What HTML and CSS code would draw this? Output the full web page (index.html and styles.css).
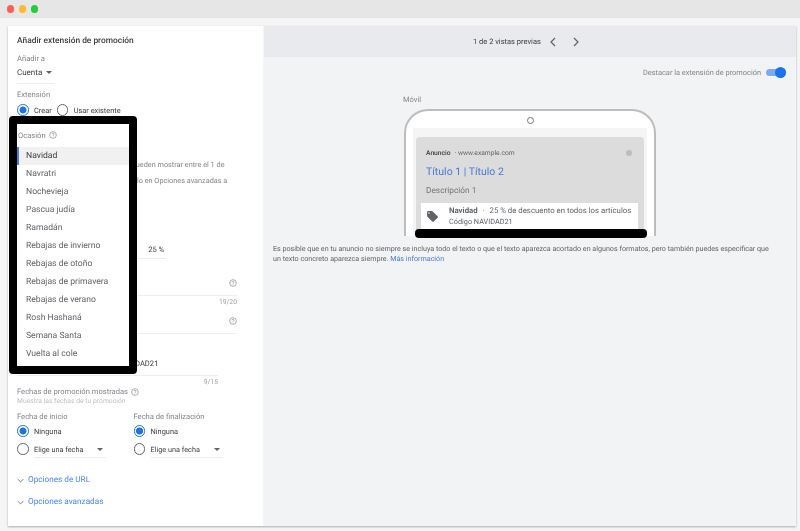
FILE: index.html
```html
<!DOCTYPE html>
<html lang="es">
<head>
    <meta charset="UTF-8">
    <title>Añadir extensión de promoción</title>
    <link rel="stylesheet" href="styles.css">
</head>
<body>
    <div class="titlebar">
        <span class="dot dot-red"></span>
        <span class="dot dot-yellow"></span>
        <span class="dot dot-green"></span>
    </div>

    <div class="window">
        <!-- Form -->
        <div class="form">
            <h1>Añadir extensión de promoción</h1>

            <div class="label add-label">Añadir a</div>
            <div class="select account"><span>Cuenta</span><i class="caret"></i></div>

            <div class="label ext-label">Extensión</div>
            <div class="radio-row">
                <span class="radio on"></span><span class="radio-text">Crear</span>
                <span class="radio second"></span><span class="radio-text">Usar existente</span>
            </div>

            <p class="hidden-note first">Las extensiones de promoción se pueden mostrar entre el 1 de</p>
            <p class="hidden-note">octubre y el 31 de diciembre. Cámbialo en Opciones avanzadas a</p>

            <div class="field percent"><span>25 %</span></div>

            <div class="field wide help-field">
                <svg class="help" viewBox="0 0 12 12"><use href="#help"></use></svg>
            </div>
            <div class="counter">19/20</div>

            <div class="field wide help-field second-help">
                <svg class="help" viewBox="0 0 12 12"><use href="#help"></use></svg>
            </div>

            <div class="field code"><span>NAVIDAD21</span></div>
            <div class="counter code-counter">9/15</div>

            <div class="label dates-label">Fechas de promoción mostradas
                <svg class="help" viewBox="0 0 12 12"><use href="#help"></use></svg>
            </div>
            <div class="hint">Muestra las fechas de tu promoción</div>

            <div class="dates">
                <div class="date-col">
                    <div class="label">Fecha de inicio</div>
                    <div class="radio-row date-none"><span class="radio on"></span><span class="radio-text">Ninguna</span></div>
                    <div class="radio-row date-pick"><span class="radio"></span><div class="select pick"><span>Elige una fecha</span><i class="caret"></i></div></div>
                </div>
                <div class="date-col">
                    <div class="label">Fecha de finalización</div>
                    <div class="radio-row date-none"><span class="radio on"></span><span class="radio-text">Ninguna</span></div>
                    <div class="radio-row date-pick"><span class="radio"></span><div class="select pick"><span>Elige una fecha</span><i class="caret"></i></div></div>
                </div>
            </div>

            <a class="expander url-options" href="#"><svg viewBox="0 0 10 6"><path d="M1 1l4 4 4-4"/></svg>Opciones de URL</a>
            <a class="expander" href="#"><svg viewBox="0 0 10 6"><path d="M1 1l4 4 4-4"/></svg>Opciones avanzadas</a>
        </div>

        <!-- Preview -->
        <div class="preview">
            <div class="pager">
                <span>1 de 2 vistas previas</span>
                <svg viewBox="0 0 8 10"><path d="M6 1L2 5l4 4"/></svg>
                <svg viewBox="0 0 8 10"><path d="M2 1l4 4-4 4"/></svg>
            </div>

            <div class="highlight">
                <span>Destacar la extensión de promoción</span>
                <div class="toggle"><i></i></div>
            </div>

            <div class="device-label">Móvil</div>
            <div class="phone">
                <div class="camera"></div>
                <div class="screen">
                    <div class="ad">
                        <div class="ad-top">
                            <b>Anuncio</b><span>· www.example.com</span><i></i>
                        </div>
                        <div class="ad-title">Título 1 | Título 2</div>
                        <div class="ad-desc">Descripción 1</div>
                        <div class="promo">
                            <svg viewBox="0 0 24 24"><path d="M21.4 11.6l-9-9C12 2.2 11.5 2 11 2H4c-1.1 0-2 .9-2 2v7c0 .6.2 1.1.6 1.4l9 9c.4.4.9.6 1.4.6s1.1-.2 1.4-.6l7-7c.4-.4.6-.9.6-1.4s-.2-1.1-.6-1.4zM5.5 7C4.7 7 4 6.3 4 5.500S4.700 4 5.500 4 7 4.700 7 5.500 6.300 7 5.500 7z"/></svg>
                            <div>
                                <div class="promo-line"><b>Navidad</b> <span class="sep">·</span> 25 % de descuento en todos los artículos</div>
                                <div class="promo-code">Código NAVIDAD21</div>
                            </div>
                        </div>
                    </div>
                </div>
                <div class="phone-mask"></div>
            </div>

            <p class="note">Es posible que en tu anuncio no siempre se incluya todo el texto o que el texto aparezca acortado en algunos formatos, pero también puedes especificar que un texto concreto aparezca siempre. <a href="#">Más información</a></p>
        </div>

        <!-- Occasion menu over the form -->
        <div class="occasion">
            <div class="occasion-head">Ocasión
                <svg class="help" viewBox="0 0 12 12"><use href="#help"></use></svg>
            </div>
            <div class="item active">Navidad</div>
            <div class="item">Navratri</div>
            <div class="item">Nochevieja</div>
            <div class="item">Pascua judía</div>
            <div class="item">Ramadán</div>
            <div class="item">Rebajas de invierno</div>
            <div class="item">Rebajas de otoño</div>
            <div class="item">Rebajas de primavera</div>
            <div class="item">Rebajas de verano</div>
            <div class="item">Rosh Hashaná</div>
            <div class="item">Semana Santa</div>
            <div class="item">Vuelta al cole</div>
        </div>
    </div>

    <svg class="defs" width="0" height="0">
        <symbol id="help" viewBox="0 0 12 12">
            <circle cx="6" cy="6" r="5" fill="none" stroke="currentColor" stroke-width="1"/>
            <path d="M4.400 4.800C4.400 3.900 5.100 3.300 6 3.300s1.600.6 1.600 1.400c0 1.100-1.600 1.200-1.600 2.500" fill="none" stroke="currentColor" stroke-width="1"/>
            <circle cx="6" cy="8.800" r=".6" fill="currentColor"/>
        </symbol>
    </svg>
</body>
</html>
```

FILE: styles.css
```css
* {
    box-sizing: border-box;
}

html, body {
    margin: 0;
    padding: 0;
    height: 531px;
    overflow: hidden;
}

body {
    font-family: Roboto, "Liberation Sans", sans-serif;
    background-color: #f5f5f5;
    color: #3c4043;
    text-rendering: geometricPrecision;
}

.defs {
    position: absolute;
}

/* Title bar */

.titlebar {
    height: 18px;
    background-color: #e6e6e6;
    display: flex;
    align-items: center;
    gap: 4.500px;
    padding-left: 6.500px;
}

.dot {
    width: 7.500px;
    height: 7.500px;
    border-radius: 50%;
}

.dot-red { background-color: #fb5f57; }
.dot-yellow { background-color: #fcbc2e; }
.dot-green { background-color: #29c940; }

.window {
    position: relative;
    display: flex;
    margin: 8px 4px 0 8px;
    height: 500px;
    gap: 1px;
    box-shadow: 0 1px 2px rgba(0, 0, 0, 0.3);
    filter: blur(0.4px);
    will-change: transform;
}

/* Form */

.form {
    width: 255px;
    background-color: #ffffff;
    padding: 10px 9px 0;
    font-size: 7.500px;
}

h1 {
    font-size: 8.400px;
    font-weight: 500;
    line-height: 11px;
    margin: 0;
    color: #3c4043;
}

.label {
    font-size: 7.600px;
    line-height: 10px;
    color: #80868b;
}

.add-label { margin-top: 7px; }

.select {
    display: flex;
    align-items: center;
    color: #3c4043;
    border-bottom: 1px solid #eeeeee;
}

.caret {
    width: 0;
    height: 0;
    border-left: 3px solid transparent;
    border-right: 3px solid transparent;
    border-top: 3px solid #5f6368;
}

.account {
    width: 37px;
    height: 17px;
    margin-top: 3px;
    padding-bottom: 5px;
    font-size: 8px;
    gap: 4px;
}

.ext-label { margin-top: 6px; }

.radio-row {
    display: flex;
    align-items: center;
    height: 12px;
}

.radio {
    width: 11.500px;
    height: 11.500px;
    flex: none;
    border-radius: 50%;
    border: 1px solid #5f6368;
}

.radio.on {
    border-color: #1a73e8;
    background: radial-gradient(circle, #1a73e8 0 3.200px, #ffffff 3.800px);
}

.radio.second {
    margin-left: 5px;
}

.radio-text {
    margin-left: 5.500px;
    font-size: 7.400px;
    color: #3c4043;
}

.ext-label + .radio-row { margin-top: 4px; }

.hidden-note {
    margin: 0;
    font-size: 7.300px;
    line-height: 10px;
    color: #80868b;
    white-space: nowrap;
    text-align: right;
    width: 207.500px;
}

.hidden-note.first { margin-top: 44px; }
.hidden-note + .hidden-note { margin-top: 6px; width: 201px; }

.field {
    border-bottom: 1px solid #eeeeee;
    font-size: 7.600px;
    display: flex;
    align-items: center;
}

.percent {
    width: 60px;
    height: 16px;
    margin: 57px 0 0 89px;
    justify-content: flex-end;
    padding: 0 2px 3px 0;
    font-size: 7.500px;
}

.wide {
    width: 220px;
    justify-content: flex-end;
}

.help-field {
    height: 22px;
    margin-top: 15px;
    padding: 0 0 3px 0;
}

.help {
    width: 8px;
    height: 8px;
    color: #80868b;
    flex: none;
}

.counter {
    width: 220px;
    text-align: right;
    font-size: 6.800px;
    line-height: 9px;
    margin-top: 2px;
    color: #9aa0a6;
}

.second-help {
    height: 22px;
    margin-top: 5px;
}

.code {
    width: 201px;
    height: 21px;
    margin-top: 21px;
    padding: 0 0 3px 101px;
    font-size: 7.600px;
}

.code-counter {
    width: 201px;
    margin-top: 2px;
}

.dates-label {
    display: flex;
    align-items: center;
    gap: 3px;
}

.hint {
    font-size: 6.800px;
    line-height: 9px;
    color: #bdc1c6;
}

.dates {
    display: flex;
    margin-top: 6px;
}

.date-col {
    width: 116.500px;
}

.date-none { margin-top: 3px; }
.date-pick { margin-top: 6px; }

.pick {
    width: 72px;
    height: 15px;
    margin: 3px 0 0 5.500px;
    padding-bottom: 2px;
    font-size: 7.300px;
    justify-content: space-between;
    padding-right: 3px;
}

.expander {
    display: flex;
    align-items: center;
    gap: 4px;
    font-size: 8.200px;
    line-height: 11px;
    color: #4285f4;
    text-decoration: none;
}

.expander svg {
    width: 7px;
    height: 5px;
    fill: none;
    stroke: #5f6368;
    stroke-width: 1.200;
}

.url-options {
    margin-top: 20px;
    margin-bottom: 11px;
}

/* Occasion menu */

.occasion {
    position: absolute;
    left: 1px;
    top: 90px;
    width: 128px;
    height: 258px;
    background-color: #ffffff;
    border: 8px solid #000000;
    border-radius: 4px;
    font-size: 8.600px;
}

.occasion-head {
    display: flex;
    align-items: center;
    gap: 3px;
    height: 22px;
    margin-bottom: 1px;
    padding-left: 1px;
    font-size: 7.600px;
    color: #80868b;
}

.item {
    height: 18px;
    line-height: 18px;
    padding-left: 9px;
    color: #5f6368;
}

.item.active {
    background-color: #f1f1f1;
    border-left: 2px solid #4a7fe0;
    padding-left: 7px;
    color: #3c4043;
}

/* Preview */

.preview {
    flex: 1;
    background-color: #f1f3f4;
}

.pager {
    height: 31px;
    background-color: #e8eaed;
    display: flex;
    align-items: center;
    padding-left: 209px;
    font-size: 7.500px;
    color: #3c4043;
}

.pager svg {
    width: 8px;
    height: 10px;
    fill: none;
    stroke: #5f6368;
    stroke-width: 1.200;
    margin-left: 15px;
}

.pager span + svg {
    margin-left: 8px;
}

.highlight {
    display: flex;
    align-items: center;
    justify-content: flex-end;
    gap: 5px;
    height: 12px;
    margin-top: 9px;
    padding-right: 10px;
    font-size: 7.400px;
    color: #80868b;
}

.toggle {
    position: relative;
    width: 20px;
    height: 7px;
    border-radius: 4px;
    background-color: #7baaf0;
}

.toggle i {
    position: absolute;
    right: 0;
    top: -2px;
    width: 11px;
    height: 11px;
    border-radius: 50%;
    background-color: #1a73e8;
}

.device-label {
    margin: 17px 0 0 139px;
    font-size: 7.500px;
    line-height: 10px;
    color: #80868b;
}

.phone {
    position: relative;
    width: 252px;
    height: 127px;
    margin: 4px 0 0 140px;
    background-color: #ffffff;
    border: 2px solid #bdbdbd;
    border-bottom: none;
    border-radius: 24px 24px 0 0;
}

.camera {
    width: 7px;
    height: 7px;
    margin: 6px auto 0;
    border: 1px solid #757575;
    border-radius: 50%;
}

.screen {
    height: 107px;
    margin: 4px 7px 0;
    padding: 9px 3px 0;
    background-color: #f5f5f5;
}

.ad {
    height: 98px;
    padding: 10px 0 0;
    background-color: #dcdcdc;
    border-radius: 4px 4px 0 0;
}

.ad-top {
    display: flex;
    align-items: center;
    height: 11px;
    padding: 0 12px 0 10px;
    font-size: 6.700px;
    color: #5f6368;
}

.ad-top b {
    color: #3c4043;
    font-weight: 500;
    margin-right: 4px;
}

.ad-top i {
    width: 6px;
    height: 6px;
    margin-left: auto;
    background-color: #bdbdbd;
    border-radius: 50%;
}

.ad-title {
    margin: 7px 0 0 10px;
    font-size: 10.500px;
    line-height: 14px;
    color: #4a78d6;
}

.ad-desc {
    margin: 7px 0 0 10px;
    font-size: 8.300px;
    line-height: 11px;
    color: #757575;
}

.promo {
    display: flex;
    align-items: center;
    gap: 10px;
    height: 30px;
    margin: 6px 6px 0 5px;
    padding: 0 0 4px 5px;
    background-color: #ffffff;
}

.promo svg {
    width: 13px;
    height: 13px;
    fill: #5f6368;
}

.promo-line {
    font-size: 7.800px;
    line-height: 11px;
    color: #5f6368;
    white-space: nowrap;
}

.promo-line b {
    font-weight: 700;
}

.sep {
    margin: 0 3px;
}

.promo-code {
    font-size: 7.300px;
    line-height: 11px;
    color: #5f6368;
}

.phone-mask {
    position: absolute;
    left: 9px;
    right: 7px;
    top: 118px;
    height: 9px;
    background-color: #000000;
    border-radius: 4px;
}

.note {
    margin: 8px 20px 0 9px;
    font-size: 7.150px;
    line-height: 10px;
    color: #5f6368;
}

.note a {
    color: #4a78d6;
    text-decoration: none;
}
```
